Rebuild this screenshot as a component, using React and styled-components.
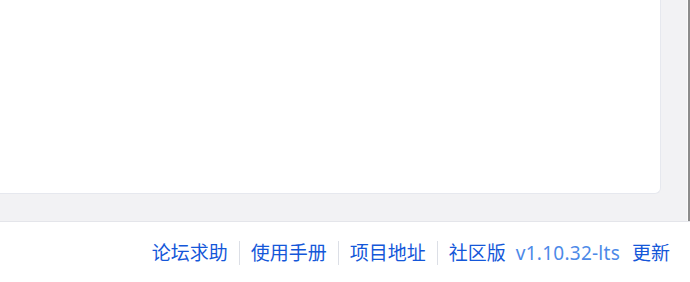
import React from "react";
import styled, { createGlobalStyle } from "styled-components";

const GlobalStyle = createGlobalStyle`
  html, body {
    margin: 0;
    padding: 0;
    background: #ffffff;
  }
  body {
    font-family: "Noto Sans", "Noto Sans CJK SC", sans-serif;
  }
`;

const Page = styled.div`
  width: 690px;
  height: 282px;
  display: flex;
  flex-direction: column;
  overflow: hidden;
`;

const Main = styled.div`
  flex: 1;
  display: flex;
  min-height: 0;
`;

const Content = styled.div`
  flex: 1;
  display: flex;
  background: #f2f2f4;
  padding: 0 26px 27px 0;
  border-right: 1px solid #fbfbfb;
`;

const Card = styled.div`
  flex: 1;
  background: #ffffff;
  border-right: 1px solid #e6e8ee;
  border-bottom: 1px solid #e6e8ee;
  border-radius: 0 0 6px 0;
`;

const ScrollTrack = styled.div`
  width: 2px;
  background: #8c8c8c;
`;

const Footer = styled.footer`
  height: 61px;
  box-sizing: border-box;
  border-top: 1px solid #e4e5ea;
  background: #ffffff;
  display: flex;
  justify-content: flex-end;
  align-items: center;
  padding: 2px 20px 0 0;
  font-family: "Noto Sans", "Noto Sans CJK SC", sans-serif;
  font-size: 19px;
`;

const FooterLink = styled.a`
  color: ${(p) => (p.muted ? "#4d8ae8" : "#1457d9")};
  text-decoration: none;
  margin-left: ${(p) => p.gap || 0}px;
  letter-spacing: ${(p) => (p.muted ? "0.25px" : "0")};
  white-space: nowrap;
  line-height: 1;
`;

const Divider = styled.span`
  width: 1px;
  height: 24px;
  background: #dcdfe6;
  margin: 0 11px;
`;

const links = ["论坛求助", "使用手册", "项目地址"];

export default function App() {
  return (
    <Page>
      <GlobalStyle />
      <Main>
        <Content>
          <Card />
        </Content>
        <ScrollTrack />
      </Main>
      <Footer>
        {links.map((text) => (
          <React.Fragment key={text}>
            <FooterLink href="#">{text}</FooterLink>
            <Divider />
          </React.Fragment>
        ))}
        <FooterLink href="#">社区版</FooterLink>
        <FooterLink href="#" muted gap={10}>
          v1.10.32-lts
        </FooterLink>
        <FooterLink href="#" gap={12}>
          更新
        </FooterLink>
      </Footer>
    </Page>
  );
}
